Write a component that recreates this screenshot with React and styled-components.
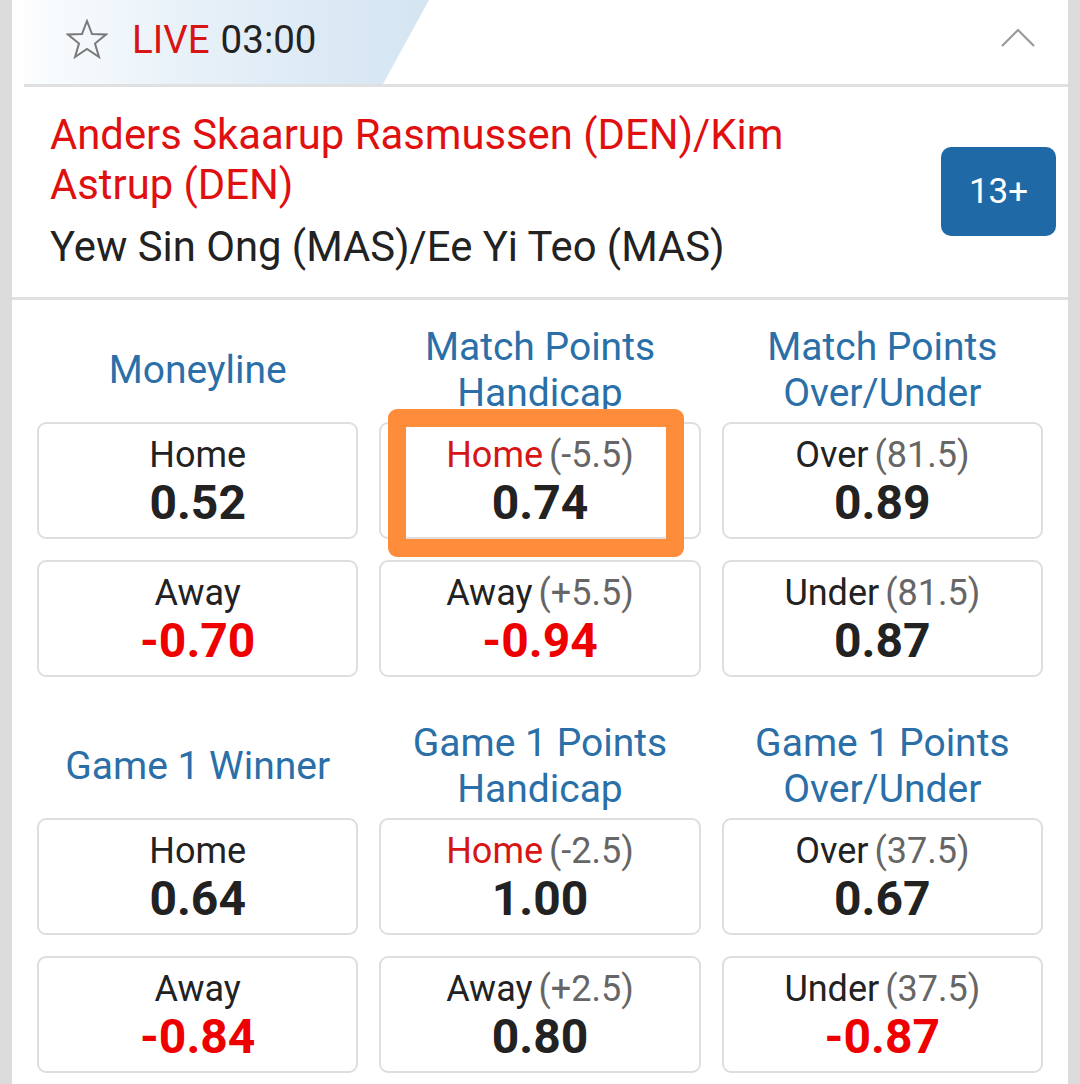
import React from "react";
import styled, { createGlobalStyle } from "styled-components";

const Global = createGlobalStyle`
  html, body { margin: 0; padding: 0; background: #dcdcdc; }
  body { font-family: Roboto, "Liberation Sans", Arial, sans-serif; }
  * { box-sizing: border-box; }
`;

const Card = styled.div`
  margin: 0 12px;
  background: #fff;
  min-height: 1084px;
`;

const Header = styled.div`
  margin-left: 12px;
  height: 87px;
  border-bottom: 3px solid #e0e0e0;
  display: flex;
  align-items: stretch;
  justify-content: space-between;
`;

const LivePanel = styled.div`
  width: 405px;
  display: flex;
  align-items: center;
  padding-left: 42px;
  padding-bottom: 6px;
  gap: 24px;
  background: linear-gradient(90deg, #fbfdfe 0%, #e6f0f8 45%, #d4e5f2 100%);
  clip-path: polygon(0 0, 100% 0, calc(100% - 46px) 100%, 0 100%);
`;

const LiveText = styled.div`
  font-size: 38.5px;
  color: #222;
`;

const LiveWord = styled.span`
  color: #d71515;
  margin-right: 11px;
`;

const Chevron = styled.div`
  display: flex;
  align-items: center;
  padding-right: 32px;
  padding-bottom: 8px;
`;

const TeamArea = styled.div`
  display: flex;
  align-items: center;
  padding: 23px 12px 25px 38px;
  border-bottom: 3px solid #e0e0e0;
`;

const Teams = styled.div`
  flex: 1;
  display: flex;
  flex-direction: column;
  gap: 12px;
  padding-right: 60px;
`;

const TeamName = styled.div`
  font-size: 41.8px;
  line-height: 50px;
  color: ${(p) => (p.$fav ? "#e01010" : "#222")};
`;

const Badge = styled.div`
  width: 115px;
  height: 89px;
  border-radius: 10px;
  background: #1f6aa6;
  color: #fff;
  font-size: 35px;
  display: flex;
  align-items: center;
  justify-content: center;
  flex-shrink: 0;
`;

const Markets = styled.div`
  padding: 23px 25px 0;
  display: flex;
  flex-direction: column;
  gap: 42px;
`;

const Section = styled.div`
  display: grid;
  grid-template-columns: repeat(3, 1fr);
  column-gap: 21px;
`;

const Column = styled.div`
  display: flex;
  flex-direction: column;
  gap: 21px;
`;

const MarketTitle = styled.div`
  height: 92px;
  margin-bottom: -14px;
  display: flex;
  align-items: center;
  justify-content: center;
  text-align: center;
  color: #2a6fa8;
  font-size: 39px;
  line-height: 46px;
  padding-top: 2px;
`;

const Cell = styled.div`
  position: relative;
  height: 117px;
  border: 2px solid #dedede;
  border-radius: 9px;
  display: flex;
  flex-direction: column;
  align-items: center;
  justify-content: center;
  padding-top: 3px;
`;

const Label = styled.div`
  font-size: 36px;
  line-height: 42px;
  color: #222;
`;

const LabelName = styled.span`
  color: ${(p) => (p.$red ? "#d71515" : "#222")};
`;

const Line = styled.span`
  color: #666;
  margin-left: 6px;
`;

const Odds = styled.div`
  font-size: 48px;
  line-height: 54px;
  font-weight: 700;
  color: ${(p) => (p.$neg ? "#ee0000" : "#222")};
`;

const Highlight = styled.div`
  position: absolute;
  left: 7px;
  top: -15px;
  width: 296px;
  height: 148px;
  border: 18px solid #ff8c3a;
  border-radius: 9px;
  pointer-events: none;
`;

const StarIcon = () => (
  <svg width="42" height="40" viewBox="0 0 42 40">
    <polygon
      points="21,2 26,15 40,15.5 29,24.5 33,38 21,30 9,38 13,24.5 2,15.5 16,15"
      fill="none"
      stroke="#7a7a7a"
      strokeWidth="2"
      strokeLinejoin="miter"
    />
  </svg>
);

const ChevronIcon = () => (
  <svg width="36" height="20" viewBox="0 0 36 20">
    <polyline points="2,18 18,2 34,18" fill="none" stroke="#9a9a9a" strokeWidth="2.2" />
  </svg>
);

const sections = [
  [
    {
      title: "Moneyline",
      cells: [
        { name: "Home", odds: "0.52" },
        { name: "Away", odds: "-0.70" },
      ],
    },
    {
      title: ["Match Points", "Handicap"],
      cells: [
        { name: "Home", line: "(-5.5)", odds: "0.74", red: true, hl: true },
        { name: "Away", line: "(+5.5)", odds: "-0.94" },
      ],
    },
    {
      title: ["Match Points", "Over/Under"],
      cells: [
        { name: "Over", line: "(81.5)", odds: "0.89" },
        { name: "Under", line: "(81.5)", odds: "0.87" },
      ],
    },
  ],
  [
    {
      title: "Game 1 Winner",
      cells: [
        { name: "Home", odds: "0.64" },
        { name: "Away", odds: "-0.84" },
      ],
    },
    {
      title: ["Game 1 Points", "Handicap"],
      cells: [
        { name: "Home", line: "(-2.5)", odds: "1.00", red: true },
        { name: "Away", line: "(+2.5)", odds: "0.80" },
      ],
    },
    {
      title: ["Game 1 Points", "Over/Under"],
      cells: [
        { name: "Over", line: "(37.5)", odds: "0.67" },
        { name: "Under", line: "(37.5)", odds: "-0.87" },
      ],
    },
  ],
];

export default function App() {
  return (
    <>
      <Global />
      <Card>
        <Header>
          <LivePanel>
            <StarIcon />
            <LiveText>
              <LiveWord>LIVE</LiveWord>03:00
            </LiveText>
          </LivePanel>
          <Chevron>
            <ChevronIcon />
          </Chevron>
        </Header>
        <TeamArea>
          <Teams>
            <TeamName $fav>Anders Skaarup Rasmussen (DEN)/Kim Astrup (DEN)</TeamName>
            <TeamName>Yew Sin Ong (MAS)/Ee Yi Teo (MAS)</TeamName>
          </Teams>
          <Badge>13+</Badge>
        </TeamArea>
        <Markets>
          {sections.map((sec, si) => (
            <Section key={si}>
              {sec.map((m, mi) => (
                <Column key={mi}>
                  <MarketTitle>
                    {Array.isArray(m.title) ? (
                      <span>
                        {m.title[0]}
                        <br />
                        {m.title[1]}
                      </span>
                    ) : (
                      m.title
                    )}
                  </MarketTitle>
                  {m.cells.map((c, ci) => (
                    <Cell key={ci}>
                      <Label>
                        <LabelName $red={c.red}>{c.name}</LabelName>
                        {c.line && <Line>{c.line}</Line>}
                      </Label>
                      <Odds $neg={c.odds.startsWith("-")}>{c.odds}</Odds>
                      {c.hl && <Highlight />}
                    </Cell>
                  ))}
                </Column>
              ))}
            </Section>
          ))}
        </Markets>
      </Card>
    </>
  );
}
